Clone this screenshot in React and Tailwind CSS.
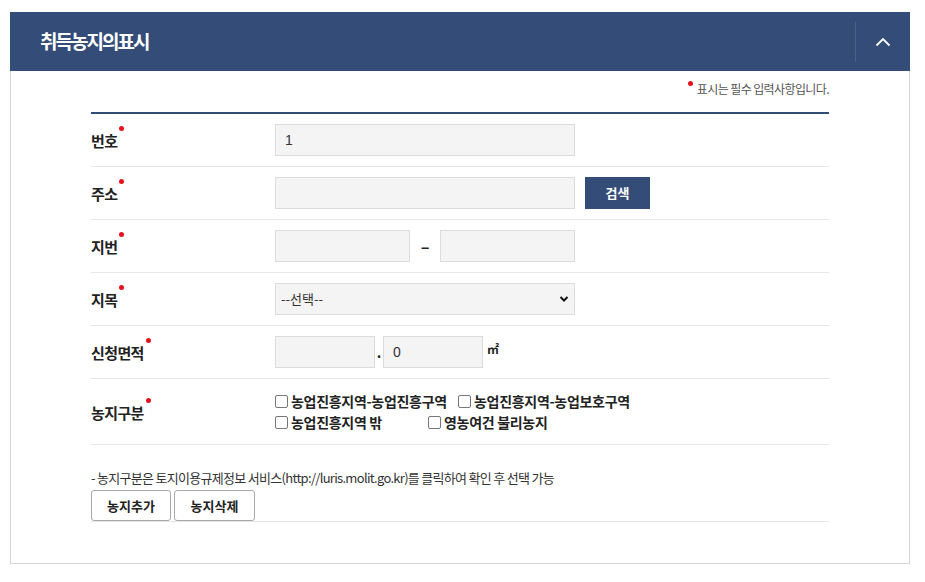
import React from 'react';

const KR = { fontFamily: '"Noto Sans CJK KR", "Noto Sans", sans-serif' };

function Dot() {
  return <span className="absolute -top-[4px] -right-[7px] w-[5px] h-[5px] rounded-full bg-[#e5121d]" />;
}

function Label({ children }) {
  return (
    <div className="w-[184px] shrink-0 pt-[1px]">
      <span className="relative inline-block text-[15px] font-bold tracking-[-0.6px] text-[#222]">
        {children}
        <Dot />
      </span>
    </div>
  );
}

function Field({ className = '', value = '' }) {
  return (
    <input
      readOnly
      value={value}
      className={`h-[32px] border border-[#dcdcdc] bg-[#f4f4f4] px-[9px] text-[14px] text-[#333] outline-none ${className}`}
      style={{ fontFamily: '"Liberation Sans", Arial, sans-serif' }}
    />
  );
}

function Row({ label, children, tall }) {
  return (
    <div className={`flex items-center border-b border-[#e6e6e6] ${tall ? 'h-[66px]' : 'h-[53px]'}`}>
      <Label>{label}</Label>
      <div className="flex items-center">{children}</div>
    </div>
  );
}

function Check({ children, className = '' }) {
  return (
    <label className={`flex items-center text-[14px] leading-[21px] font-bold tracking-[-0.3px] text-[#222] ${className}`}>
      <span className="w-[13px] h-[13px] mr-[3px] rounded-[2px] border border-[#777] bg-white shrink-0" />
      {children}
    </label>
  );
}

export default function App() {
  return (
    <div className="min-h-screen bg-white pt-[12px] pl-[10px]" style={KR}>
      <div className="w-[900px]">
        {/* 헤더 */}
        <div className="h-[59px] bg-[#344c78] flex items-center pl-[30px]">
          <h2 className="flex-1 text-white text-[19px] font-bold tracking-[-2px]">취득농지의표시</h2>
          <div className="h-[40px] w-px bg-[#4b6088]" />
          <div className="w-[54px] flex items-center justify-center">
            <svg width="16" height="10" viewBox="0 0 16 10" fill="none">
              <path d="M1.5 8.5 L8 2 L14.5 8.5" stroke="#fff" strokeWidth="1.8" />
            </svg>
          </div>
        </div>

        <div className="border-x border-b border-[#d6d6d6] px-[80px] pb-[41px]">
          <div className="flex justify-end items-start pt-[9px] h-[41px]">
            <span className="w-[5px] h-[5px] rounded-full bg-[#e5121d] mt-[1px] mr-[4px]" />
            <span className="text-[12px] tracking-[-0.6px] text-[#555]">표시는 필수 입력사항입니다.</span>
          </div>
          <div className="h-[2px] bg-[#344c78]" />

          <Row label="번호">
            <Field className="w-[300px]" value="1" />
          </Row>
          <Row label="주소">
            <Field className="w-[300px]" />
            <button className="ml-[10px] w-[65px] h-[32px] bg-[#344c78] text-white text-[13px] font-bold">검색</button>
          </Row>
          <Row label="지번">
            <Field className="w-[135px]" />
            <span className="w-[30px] text-center text-[16px] font-bold text-[#222]">–</span>
            <Field className="w-[135px]" />
          </Row>
          <Row label="지목">
            <div className="relative w-[300px] h-[32px] border border-[#dcdcdc] bg-[#f4f4f4] flex items-center pl-[5px] text-[13px] text-[#333]">
              --선택--
              <svg className="absolute right-[5px] top-[11px]" width="10" height="8" viewBox="0 0 10 8" fill="none">
                <path d="M1.5 2 L5 5.5 L8.5 2" stroke="#111" strokeWidth="2" />
              </svg>
            </div>
          </Row>
          <Row label="신청면적">
            <Field className="w-[100px]" />
            <span className="w-[8px] text-center text-[14px] font-bold text-[#222]">.</span>
            <Field className="w-[100px]" value="0" />
            <span className="ml-[4px] -mt-[6px] text-[12px] font-bold text-[#222]">㎡</span>
          </Row>
          <Row label="농지구분" tall>
            <div className="flex flex-col">
              <div className="flex">
                <Check className="w-[183px]">농업진흥지역-농업진흥구역</Check>
                <Check>농업진흥지역-농업보호구역</Check>
              </div>
              <div className="flex">
                <Check className="w-[153px]">농업진흥지역 밖</Check>
                <Check>영농여건 불리농지</Check>
              </div>
            </div>
          </Row>

          <p className="mt-[24px] text-[13px] tracking-[-0.7px] text-[#333] leading-[18px]">
            - 농지구분은 토지이용규제정보 서비스(http://luris.molit.go.kr)를 클릭하여 확인 후 선택 가능
          </p>
          <div className="flex gap-[3px] border-b border-[#e6e6e6] mt-[3px]">
            <button className="w-[80px] h-[31px] border border-[#a9a9a9] rounded-[3px] bg-white text-[13px] font-bold text-[#222]">농지추가</button>
            <button className="w-[81px] h-[31px] border border-[#a9a9a9] rounded-[3px] bg-white text-[13px] font-bold text-[#222]">농지삭제</button>
          </div>
        </div>
      </div>
    </div>
  );
}
